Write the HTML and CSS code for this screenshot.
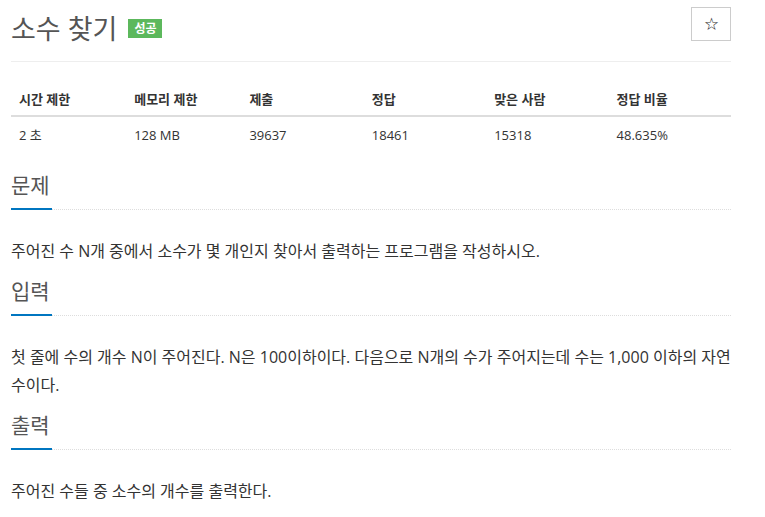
FILE: index.html
```html
<!DOCTYPE html>
<html lang="ko">
<head>
  <meta charset="UTF-8">
  <meta name="viewport" content="width=device-width, initial-scale=1.0">
  <title>소수 찾기</title>
  <link rel="stylesheet" href="styles.css">
</head>
<body>

  <div class="page">
    <div class="page-header">
      <h1><span class="title">소수 찾기</span> <span class="label-ac">성공</span></h1>
      <button class="star-btn">☆</button>
    </div>

    <table class="info">
      <thead>
        <tr>
          <th style="width: 16%">시간 제한</th>
          <th style="width: 16%">메모리 제한</th>
          <th style="width: 17%">제출</th>
          <th style="width: 17%">정답</th>
          <th style="width: 17%">맞은 사람</th>
          <th style="width: 17%">정답 비율</th>
        </tr>
      </thead>
      <tbody>
        <tr>
          <td>2 초</td>
          <td>128 MB</td>
          <td>39637</td>
          <td>18461</td>
          <td>15318</td>
          <td>48.635%</td>
        </tr>
      </tbody>
    </table>

    <section class="problem-section">
      <div class="headline"><h2>문제</h2></div>
      <p>주어진 수 N개 중에서 소수가 몇 개인지 찾아서 출력하는 프로그램을 작성하시오.</p>
    </section>

    <section class="problem-section">
      <div class="headline"><h2>입력</h2></div>
      <p>첫 줄에 수의 개수 N이 주어진다. N은 100이하이다. 다음으로 N개의 수가 주어지는데 수는 1,000 이하의 자연 수이다.</p>
    </section>

    <section class="problem-section">
      <div class="headline"><h2>출력</h2></div>
      <p>주어진 수들 중 소수의 개수를 출력한다.</p>
    </section>
  </div>

</body>
</html>
```

FILE: styles.css
```css
body {
  margin: 0;
  padding: 0;
  background-color: #fff;
  color: #333;
  font-family: 'Open Sans', 'Noto Sans CJK KR', sans-serif;
}

.page {
  width: 720px;
  margin-left: 11px;
}

.page-header {
  display: flex;
  justify-content: space-between;
  align-items: flex-start;
  padding-top: 7px;
  height: 54px;
  border-bottom: 1px solid #eee;
}

.page-header h1 {
  margin: 0;
  height: 40px;
  display: flex;
  align-items: center;
  gap: 11px;
  font-size: 27px;
  font-weight: normal;
  color: #555;
}

.label-ac {
  display: inline-block;
  background-color: #5cb85c;
  color: white;
  font-size: 12px;
  font-weight: bold;
  line-height: 19px;
  padding: 0 6px;
  margin-top: 3px;
}

.star-btn {
  width: 40px;
  height: 34px;
  background: white;
  border: 1px solid #ccc;
  color: #333;
  font-size: 15px;
  padding: 0;
  cursor: pointer;
}

.info {
  width: 100%;
  margin-top: 19px;
  border-collapse: collapse;
  font-size: 13px;
}

.info th, .info td {
  padding: 8px;
  line-height: 20px;
  text-align: left;
}

.info th {
  font-weight: bold;
  padding-bottom: 6px;
  border-bottom: 2px solid #ddd;
}

.problem-section {
  margin-top: 11px;
}

.problem-section:first-of-type {
  margin-top: 17px;
}

.headline {
  display: flex;
  border-bottom: 1px dotted #ddd;
}

.headline h2 {
  margin: 0 0 -1px 0;
  padding: 0 2px 8px 0;
  line-height: 30px;
  font-size: 21px;
  font-weight: normal;
  color: #555;
  border-bottom: 2px solid #0076c0;
}

.problem-section p {
  margin: 27px 0 0 0;
  font-size: 16px;
  line-height: 28px;
}
```
